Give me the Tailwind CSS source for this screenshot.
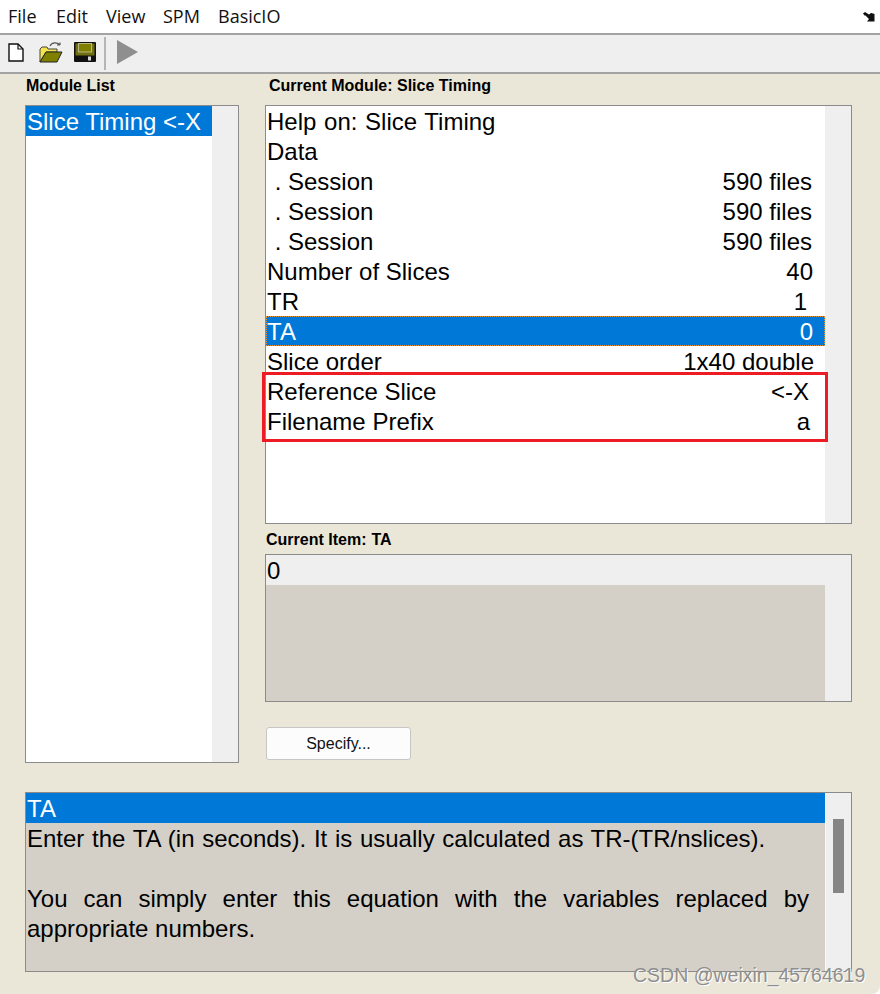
<!DOCTYPE html>
<html lang="en">
  <head>
    <meta charset="UTF-8" />
    <title>Batch Editor</title>
    <script src="https://cdn.jsdelivr.net/npm/@tailwindcss/browser@4"></script>
  </head>
  <body class="bg-white font-['Liberation_Sans',sans-serif] text-black">
    <div class="relative h-[994px] w-[880px] overflow-hidden rounded-br-[8px] bg-[#ebe7d8]">
      <!-- Menu bar -->
      <header class="flex h-[35px] items-center justify-between border-b-2 border-[#a3a3a3] bg-white pl-[8px] pr-[5px] font-['Open_Sans',sans-serif] text-[18px] text-[#111]">
        <nav class="flex">
          <span class="w-[48px]">File</span>
          <span class="w-[50px]">Edit</span>
          <span class="w-[57px]">View</span>
          <span class="w-[55px]">SPM</span>
          <span>BasicIO</span>
        </nav>
        <svg class="h-[10px] w-[12px]" viewBox="0 0 12 10">
          <path d="M0 1.5 2 0 6 2.5 8 1 8.5 1 11.5 2 11.5 9.5 4 9.5 6 7 2.5 3.5 1.5 3.5Z" fill="#111" />
        </svg>
      </header>

      <!-- Toolbar -->
      <div class="flex h-[39px] items-center border-b-2 border-[#a3a3a3] bg-[#efefef] pb-[3px] pl-[8px]">
        <svg class="h-[19px] w-[16px]" viewBox="0 0 16 19">
          <path d="M1 1H10L15 6V18H1Z" fill="#fff" stroke="#111" stroke-width="1.4" />
          <path d="M10 1V6H15" fill="none" stroke="#111" stroke-width="1.2" />
        </svg>
        <svg class="ml-[15px] h-[21px] w-[24px]" viewBox="0 0 24 21">
          <path d="M1 20V7L3 5H8L9 7H18V10H7L1 20Z" fill="#f2e44a" stroke="#444" stroke-width="1" />
          <path d="M1 20 7 10H23L18 20Z" fill="#808000" stroke="#222" stroke-width="1" />
          <path d="M11 4C13 0 18 0 21 3M21 3V0.5M21 3H18" fill="none" stroke="#555" stroke-width="1.2" />
        </svg>
        <svg class="ml-[11px] h-[20px] w-[22px]" viewBox="0 0 22 20">
          <rect x="0" y="0" width="22" height="20" rx="1" fill="#111" />
          <rect x="1.5" y="1.5" width="19" height="12" fill="#6f6f10" />
          <rect x="4.5" y="1.5" width="13" height="8.5" fill="#808000" stroke="#b8b88a" stroke-width="1" />
          <rect x="14" y="14.5" width="3" height="4" fill="#d8d8d8" />
        </svg>
        <div class="ml-[8px] mt-[3px] h-[33px] w-[2px] bg-[#b5b5b5]"></div>
        <svg class="ml-[11px] h-[24px] w-[21px]" viewBox="0 0 21 24">
          <path d="M0 0 21 12 0 24Z" fill="#8f8f8f" />
        </svg>
      </div>

      <!-- Main panels -->
      <div class="flex gap-[26px] pl-[25px]">
        <section class="w-[214px]">
          <h2 class="flex h-[31px] items-center pb-[13px] pl-[1px] pt-[5px] text-[16px] leading-none font-bold">Module List</h2>
          <div class="flex h-[658px] border border-[#8b8b8b] bg-white">
            <div class="flex-1">
              <div class="h-[30px] bg-[#0078d7] pl-[1px] text-[24px] leading-[32px] text-white">Slice Timing &lt;-X</div>
            </div>
            <div class="w-[26px] bg-[#efefef]"></div>
          </div>
        </section>

        <section class="w-[587px]">
          <h2 class="flex h-[31px] items-center pb-[13px] pl-[4px] pt-[5px] text-[16px] leading-none font-bold">Current Module: Slice Timing</h2>
          <div class="flex h-[419px] border border-[#8b8b8b] bg-white">
            <div class="flex-1 text-[24px] leading-[32px]">
              <div class="h-[30px] pl-[1px] [word-spacing:1px]">Help on: Slice Timing</div>
              <div class="h-[30px] pl-[1px]">Data</div>
              <div class="flex h-[30px] justify-between pl-[2px] pr-[13px]"><span>&nbsp;. Session</span><span>590 files</span></div>
              <div class="flex h-[30px] justify-between pl-[2px] pr-[13px]"><span>&nbsp;. Session</span><span>590 files</span></div>
              <div class="flex h-[30px] justify-between pl-[2px] pr-[13px]"><span>&nbsp;. Session</span><span>590 files</span></div>
              <div class="flex h-[30px] justify-between pl-[1px] pr-[12px]"><span>Number of Slices</span><span>40</span></div>
              <div class="flex h-[30px] justify-between pl-[1px] pr-[18px]"><span>TR</span><span>1</span></div>
              <div class="flex h-[30px] justify-between border border-dotted border-[#e8963c] bg-[#0078d7] pr-[11px] leading-[30px] text-white"><span>TA</span><span>0</span></div>
              <div class="flex h-[30px] justify-between pl-[1px] pr-[11px]"><span>Slice order</span><span>1x40 double</span></div>
              <div class="flex h-[30px] justify-between pl-[1px] pr-[16px]"><span>Reference Slice</span><span>&lt;-X</span></div>
              <div class="flex h-[30px] justify-between pl-[1px] pr-[15px]"><span>Filename Prefix</span><span>a</span></div>
            </div>
            <div class="w-[26px] bg-[#efefef]"></div>
          </div>

          <h2 class="flex h-[30px] items-center pl-[1px] pt-[1px] text-[16px] leading-none font-bold">Current Item: <span class="ml-[5px]">TA</span></h2>
          <div class="flex h-[148px] border border-[#8b8b8b] bg-[#d4d0c8]">
            <div class="flex-1">
              <div class="h-[30px] bg-[#efefef] pl-[1px] text-[24px] leading-[32px]">0</div>
            </div>
            <div class="w-[26px] bg-[#efefef]"></div>
          </div>

          <button class="mt-[25px] ml-[1px] block h-[33px] w-[145px] rounded-[3px] border border-[#c6c6c6] bg-[#fcfcfc] pt-[1px] text-[16px] text-[#111]">Specify...</button>
        </section>
      </div>

      <!-- Help box -->
      <div class="ml-[25px] mt-[29px] flex h-[180px] w-[827px] border border-[#8b8b8b] bg-[#d4d0c8]">
        <div class="flex-1 text-[24px] leading-[30px]">
          <div class="h-[30px] bg-[#0078d7] pl-[1px] leading-[32px] text-white">TA</div>
          <div class="pl-[1px] pr-[16px] pt-[1px]">
            <p class="[word-spacing:1px]">Enter the TA (in seconds). It is usually calculated as TR-(TR/nslices).</p>
            <p class="mt-[30px] text-justify">You can simply enter this equation with the variables replaced by appropriate numbers.</p>
          </div>
        </div>
        <div class="w-[26px] border-l border-[#f7f7f7] bg-[#efefef] pl-[7px] pt-[26px]">
          <div class="h-[74px] w-[11px] bg-[#858585]"></div>
        </div>
      </div>

      <!-- Red annotation over the list -->
      <div class="absolute left-[262px] top-[372px] h-[70px] w-[566px] border-[3px] border-[#ed1c24]"></div>

      <!-- Watermark -->
      <div class="absolute left-[633px] top-[964px] text-[19.5px] leading-[22px] text-[#8f8f8f] [text-shadow:1px_1px_0_#fff]">CSDN @weixin_45764619</div>
    </div>
  </body>
</html>
